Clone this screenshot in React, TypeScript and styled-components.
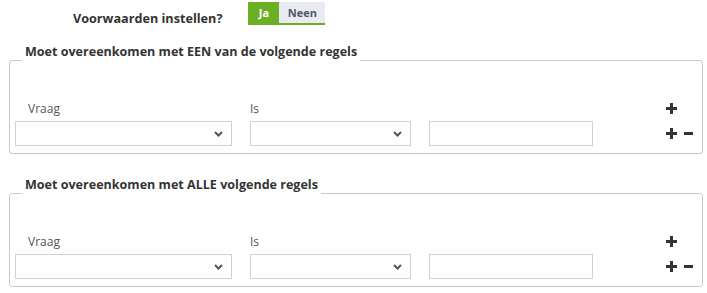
import React from "react";
import styled, { createGlobalStyle } from "styled-components";

const GREEN = "#6bb024";

const GlobalStyle = createGlobalStyle`
  body {
    margin: 0;
    background: #fff;
    font-family: "Open Sans", "DejaVu Sans", sans-serif;
    color: #333;
  }
`;

const Page = styled.div`
  width: 707px;
  padding-top: 2px;
`;

const Header = styled.div`
  display: flex;
  align-items: flex-start;
  gap: 26px;
  padding-left: 73px;
`;

const HeaderLabel = styled.span`
  margin-top: 7px;
  font-size: 12.65px;
  line-height: 18px;
  font-weight: 700;
  color: #333;
`;

const Toggle = styled.div`
  display: flex;
  border-bottom: 2px solid ${GREEN};
`;

const ToggleButton = styled.button<{ $active?: boolean; $width: number }>`
  width: ${({ $width }) => $width}px;
  height: 21px;
  border: 0;
  padding: 0;
  font-family: inherit;
  font-size: 11px;
  font-weight: 700;
  background: ${({ $active }) => ($active ? GREEN : "#ebe9f2")};
  color: ${({ $active }) => ($active ? "#fff" : "#505a6a")};
  cursor: pointer;
`;

const RuleSet = styled.fieldset<{ $top: number }>`
  margin: ${({ $top }) => $top}px 4px 0 9px;
  padding: 0 9px 7px 5px;
  border: 1px solid #c8c8c8;
  border-radius: 3px;
  min-width: 0;
`;

const Legend = styled.legend`
  margin-left: 7px;
  padding: 0 3px 16px;
  font-size: 12.55px;
  line-height: 18px;
  font-weight: 700;
  color: #333;
`;

const RuleGrid = styled.div`
  display: grid;
  grid-template-columns: 217px 161px 164px 1fr;
  column-gap: 18px;
  row-gap: 4px;
  align-items: center;
  padding-top: 23px;
`;

const FieldLabel = styled.span<{ $indent?: number }>`
  padding-left: ${({ $indent }) => $indent ?? 0}px;
  font-size: 12px;
  line-height: 17px;
  color: #555;
`;

const SelectBox = styled.div`
  position: relative;
  height: 25px;
  box-sizing: border-box;
  border: 1px solid #d2d2d2;
  background: #fff;
`;

const Chevron = styled.svg`
  position: absolute;
  right: 8px;
  top: 9px;
`;

const TextInput = styled.input`
  height: 25px;
  box-sizing: border-box;
  border: 1px solid #d2d2d2;
  padding: 0 6px;
  font-family: inherit;
  font-size: 12px;
  outline: none;
`;

const Actions = styled.div`
  display: flex;
  align-items: center;
  gap: 7px;
  justify-self: end;
  width: 27px;
`;

const IconButton = styled.button`
  display: flex;
  padding: 0;
  border: 0;
  background: none;
  cursor: pointer;
`;

const Plus = () => (
  <svg width="11" height="11" viewBox="0 0 11 11">
    <path d="M5.5 0v11M0 5.5h11" stroke="#333" strokeWidth="3" />
  </svg>
);

const Minus = () => (
  <svg width="9" height="11" viewBox="0 0 9 11">
    <path d="M0 5.5h9" stroke="#333" strokeWidth="3" />
  </svg>
);

const Select = () => (
  <SelectBox>
    <Chevron width="9" height="6" viewBox="0 0 9 6">
      <path d="M1 1l3.5 3.5L8 1" fill="none" stroke="#555" strokeWidth="2" />
    </Chevron>
  </SelectBox>
);

const Rule = ({ title, top }: { title: string; top: number }) => (
  <RuleSet $top={top}>
    <Legend>{title}</Legend>
    <RuleGrid>
      <FieldLabel $indent={13}>Vraag</FieldLabel>
      <FieldLabel>Is</FieldLabel>
      <span />
      <Actions>
        <IconButton aria-label="toevoegen">
          <Plus />
        </IconButton>
      </Actions>
      <Select />
      <Select />
      <TextInput />
      <Actions>
        <IconButton aria-label="toevoegen">
          <Plus />
        </IconButton>
        <IconButton aria-label="verwijderen">
          <Minus />
        </IconButton>
      </Actions>
    </RuleGrid>
  </RuleSet>
);

export default function App() {
  return (
    <Page>
      <GlobalStyle />
      <Header>
        <HeaderLabel>Voorwaarden instellen?</HeaderLabel>
        <Toggle>
          <ToggleButton $active $width={31}>
            Ja
          </ToggleButton>
          <ToggleButton $width={46}>Neen</ToggleButton>
        </Toggle>
      </Header>
      <Rule title="Moet overeenkomen met EEN van de volgende regels" top={16} />
      <Rule title="Moet overeenkomen met ALLE volgende regels" top={22} />
    </Page>
  );
}
